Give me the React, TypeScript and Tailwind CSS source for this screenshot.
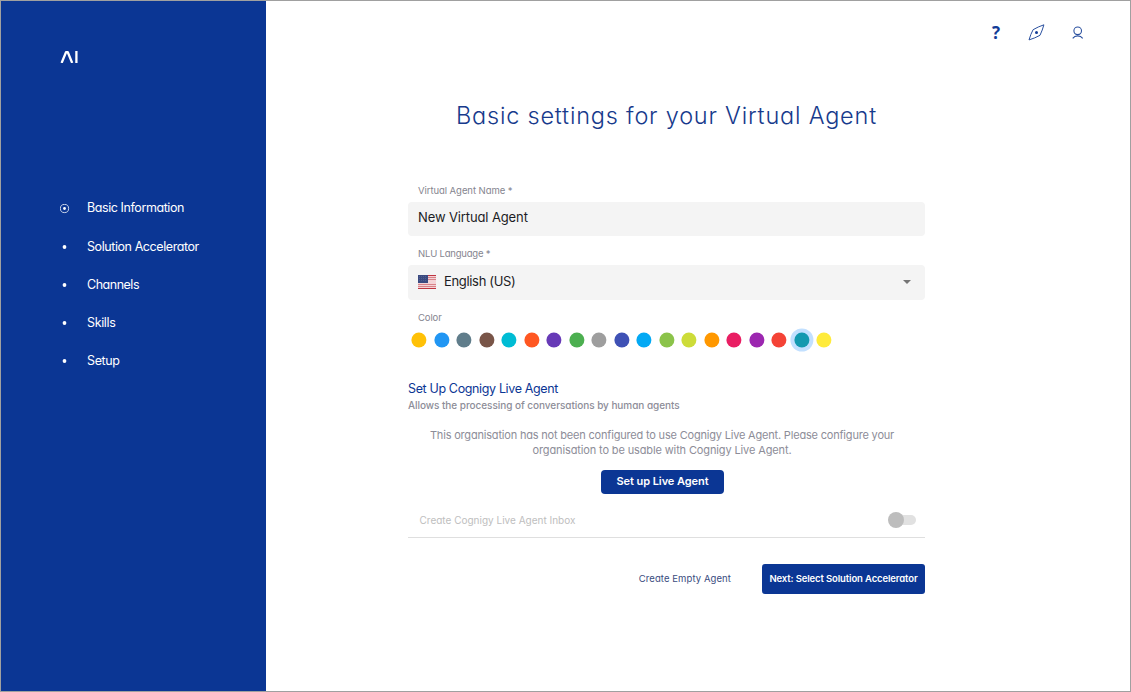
const steps = [
  { label: "Basic Information", style: "h-[39px] tracking-[-0.42px]" },
  { label: "Solution Accelerator", style: "h-[38px] tracking-[-0.42px]" },
  { label: "Channels", style: "h-[38px] tracking-[-0.48px]" },
  { label: "Skills", style: "h-[38px] tracking-[-0.36px]" },
  { label: "Setup", style: "h-[38px] tracking-[-0.36px]" },
];

const swatches = [
  "bg-[#ffc107]", "bg-[#2196f3]", "bg-[#607d8b]", "bg-[#795548]", "bg-[#00bcd4]",
  "bg-[#ff5722]", "bg-[#673ab7]", "bg-[#4caf50]", "bg-[#9e9e9e]", "bg-[#3f51b5]",
  "bg-[#03a9f4]", "bg-[#8bc34a]", "bg-[#cddc39]", "bg-[#ff9800]", "bg-[#e91e63]",
  "bg-[#9c27b0]", "bg-[#f44336]", "bg-[#1399b0] ring-4 ring-[#c2e0ff]", "bg-[#ffeb3b]",
];

function Logo() {
  return (
    <svg width="18" height="12" viewBox="0 0 18 12" fill="none" stroke="#fff" strokeWidth="2.3">
      <path d="M1.6 12 6 1.2H7.8L12.2 12" strokeLinejoin="round" />
      <path d="M16.4 0V12" />
    </svg>
  );
}

function StepMark({ active }: { active: boolean }) {
  return (
    <svg width="10" height="10" viewBox={active ? "0.5 0.5 10 10" : "0.5 0 10 10"}>
      {active && <circle cx="5" cy="5" r="4.1" fill="none" stroke="#dfe5f2" strokeWidth="0.9" />}
      <circle cx="5" cy="5" r={active ? 1.4 : 1.9} fill="#fff" />
    </svg>
  );
}

function CompassIcon() {
  return (
    <svg width="18" height="18" viewBox="0.5 0.5 18 18" fill="none" stroke="#2a509f" strokeWidth="1">
      <path d="M16.4 1.3Q10.5 3.3 5.6 6.2Q3.2 10.5 1.5 16.4Q7.5 14.6 12.5 11.8Q15 6.5 16.4 1.3Z" strokeLinejoin="round" />
      <circle cx="9" cy="9" r="1.5" fill="#123c97" stroke="none" />
    </svg>
  );
}

function UserIcon() {
  return (
    <svg width="12" height="14" viewBox="0 0 12 14" fill="none" stroke="#2a509f" strokeWidth="1.1">
      <circle cx="5.7" cy="4.8" r="3.8" />
      <path d="M0.7 12.4C2 10.6 3.6 9.9 5.7 9.9s3.7 .7 5 2.5" />
    </svg>
  );
}

function Flag() {
  return (
    <svg width="18" height="14" viewBox="0 0 18 14" shapeRendering="crispEdges" className="mb-[2px]">
      <rect width="18" height="14" fill="#f3d3d6" />
      {[0, 2, 4, 9, 11, 13].map((y) => (
        <rect key={y} y={y} width="18" height="1" fill={y === 0 || y === 13 ? "#bf3440" : "#d98289"} />
      ))}
      <rect width="10" height="8" fill="#3b4a80" />
      {[1, 3, 5, 7].flatMap((x) =>
        [1, 3, 5].map((y) => <rect key={`${x}-${y}`} x={x} y={y} width="1" height="1" fill="#505e90" />),
      )}
    </svg>
  );
}

export default function App() {
  return (
    <div className="flex h-[692px] w-[1131px] border border-[#a0a0a0] bg-white font-['Inter',sans-serif] whitespace-nowrap [font-feature-settings:'cv11']">
      <aside className="flex w-[265px] flex-col bg-[#0b3694] pt-[50px] pl-[59px] text-white">
        <Logo />
        <nav className="mt-[126px] flex flex-col text-[12.5px]">
          {steps.map((step, i) => (
            <div key={step.label} className={`flex items-center gap-[17px] ${step.style}`}>
              <StepMark active={i === 0} />
              <span>{step.label}</span>
            </div>
          ))}
        </nav>
      </aside>

      <main className="flex flex-1 flex-col">
        <header className="flex h-[63px] items-center justify-end pr-[46px]">
          <span className="w-[10px] text-center font-['Open_Sans',sans-serif] text-[17px] leading-none font-bold text-[#123c97]">?</span>
          <span className="ml-[27px]"><CompassIcon /></span>
          <span className="ml-[26px]"><UserIcon /></span>
        </header>

        <div className="ml-[142px] flex w-[517px] flex-col">
          <h1 className="mt-[35px] h-[33px] pl-12 text-[23.5px] leading-[33px] font-light tracking-[0.79px] text-[#173a8c]">
            Basic settings for your Virtual Agent
          </h1>

          <label className="mt-[51px] h-4 pl-[10px] text-[9.5px] leading-4 tracking-[-0.06px] text-[#85858f]">Virtual Agent Name *</label>
          <div className="mt-[3px] flex h-[34px] items-center rounded bg-[#f4f4f4] px-[10px] pb-[3px] text-[13px] tracking-[-0.12px] text-[#1c1c24]">
            New Virtual Agent
          </div>

          <label className="mt-[10px] h-4 pl-[10px] text-[9.5px] leading-4 tracking-[-0.2px] text-[#85858f]">NLU Language *</label>
          <div className="mt-[3px] flex h-[35px] items-center rounded bg-[#f4f4f4] px-[10px] text-[13px] text-[#1c1c24]">
            <Flag />
            <span className="ml-2 flex-1 pb-px tracking-[-0.33px]">English (US)</span>
            <svg width="16" height="8" viewBox="0 0 16 8" fill="#757575" className="mb-px">
              <path d="M4 2h8L8 6Z" />
            </svg>
          </div>

          <label className="mt-[10px] h-4 pl-[10px] text-[9.5px] leading-4 tracking-[-0.12px] text-[#85858f]">Color</label>
          <div className="mt-[6px] flex h-[15px] gap-[7.5px] pl-[3px] [transform:translate(0.4px,0.5px)]">
            {swatches.map((swatch) => (
              <span key={swatch} className={`size-[15px] rounded-full ${swatch}`} />
            ))}
          </div>

          <h2 className="mt-[33px] h-[17px] text-[12.5px] leading-[18px] tracking-[-0.36px] text-[#0b3694]">Set Up Cognigy Live Agent</h2>
          <p className="h-4 text-[10px] leading-4 font-medium tracking-[-0.05px] text-[#8d8d98]">
            Allows the processing of conversations by human agents
          </p>

          <div className="mt-[15px] flex flex-col items-center pr-[9px] text-[11px] leading-[15px] text-[#8d8d98]">
            <span className="tracking-[-0.19px]">This organisation has not been configured to use Cognigy Live Agent. Please configure your</span>
            <span className="tracking-[-0.13px]">organisation to be usable with Cognigy Live Agent.</span>
          </div>
          <button className="mt-3 ml-[193px] flex h-6 w-[123px] items-center justify-center rounded-[4px] bg-[#0b3694] pb-[2px] text-[11px] font-semibold tracking-[-0.06px] text-white">
            Set up Live Agent
          </button>

          <div className="mt-[9px] flex h-[35px] items-center justify-between border-b border-[#dfdfdf] pr-[9px] pl-[11.5px]">
            <span className="text-[10px] text-[#bebebe]">Create Cognigy Live Agent Inbox</span>
            <div className="flex h-[10px] w-[28px] items-center">
              <span className="z-10 size-4 shrink-0 rounded-full bg-[#bdbdbd]" />
              <span className="-ml-2 h-[10px] w-5 shrink-0 rounded-r-full bg-[#e1e1e1]" />
            </div>
          </div>

          <div className="mt-[26px] flex items-center justify-end">
            <button className="mr-[31px] text-[9.5px] tracking-[0.08px] text-[#3a4c80]">Create Empty Agent</button>
            <button className="h-[30px] w-[163px] rounded-[3px] bg-[#0b3694] text-[9.5px] font-semibold tracking-[-0.12px] text-white">
              Next: Select Solution Accelerator
            </button>
          </div>
        </div>
      </main>
    </div>
  );
}
